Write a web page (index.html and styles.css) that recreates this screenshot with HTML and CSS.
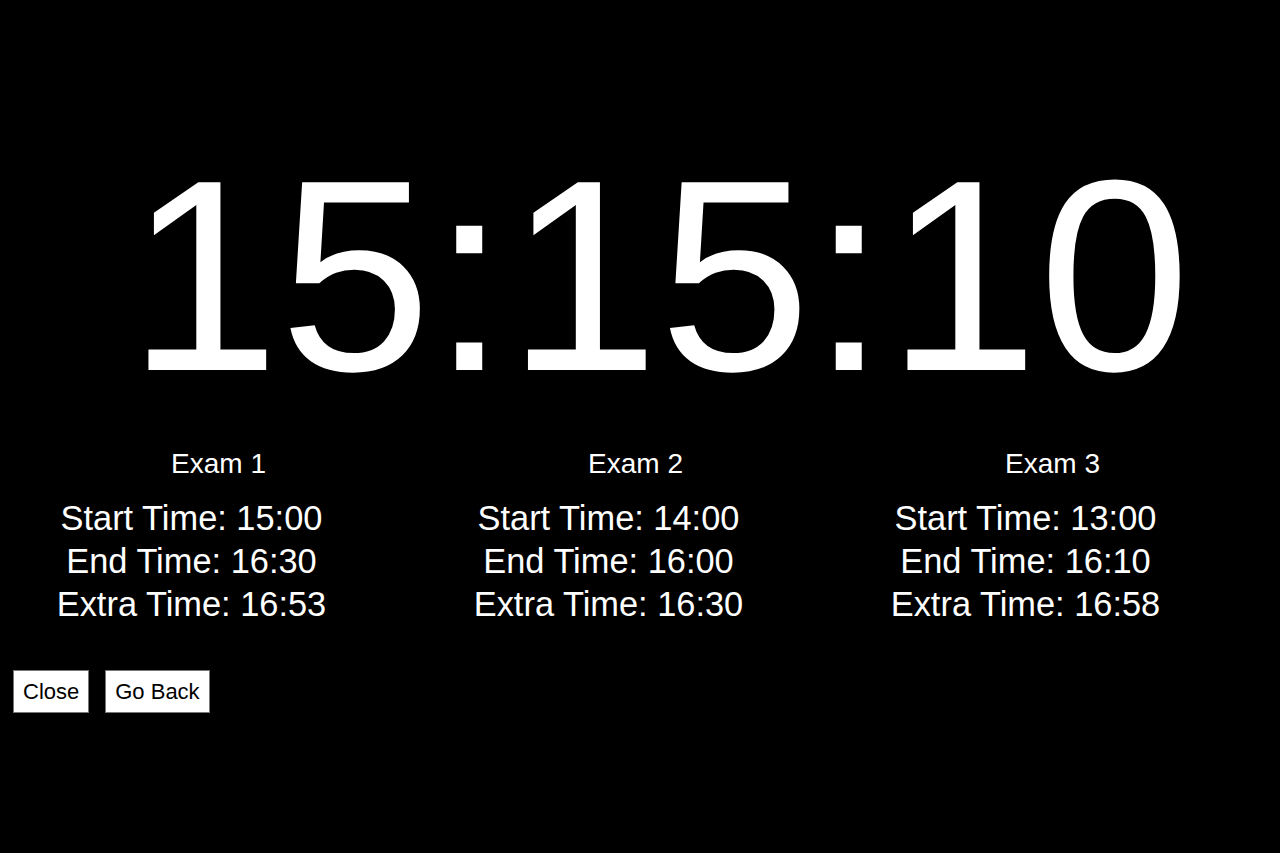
FILE: index.html
```html
<!DOCTYPE html>
<html lang="en">
<head>
<meta charset="utf-8">
<title>Exam Clock</title>
<link rel="stylesheet" href="styles.css">
</head>
<body>
<div class="clock">15:15:10</div>
<div class="exams">
  <div class="exam">
    <div class="exam-title">Exam 1</div>
    <div class="exam-times">
      <div class="time">Start Time: 15:00</div>
      <div class="time">End Time: 16:30</div>
      <div class="time">Extra Time: 16:53</div>
    </div>
  </div>
  <div class="exam">
    <div class="exam-title">Exam 2</div>
    <div class="exam-times">
      <div class="time">Start Time: 14:00</div>
      <div class="time">End Time: 16:00</div>
      <div class="time">Extra Time: 16:30</div>
    </div>
  </div>
  <div class="exam">
    <div class="exam-title">Exam 3</div>
    <div class="exam-times">
      <div class="time">Start Time: 13:00</div>
      <div class="time">End Time: 16:10</div>
      <div class="time">Extra Time: 16:58</div>
    </div>
  </div>
</div>
<div class="actions">
  <button class="btn">Close</button>
  <button class="btn">Go Back</button>
</div>
</body>
</html>
```
FILE: styles.css
```css
html, body {
  margin: 0;
  padding: 0;
  background: #000;
  color: #fff;
  font-family: "Liberation Sans", Arial, sans-serif;
}

body {
  width: 1280px;
  height: 853px;
  overflow: hidden;
}

.clock {
  margin-top: 118px;
  padding-left: 38px;
  font-size: 273px;
  line-height: 316px;
  text-align: center;
  white-space: nowrap;
}

.exams {
  display: flex;
  padding-left: 10px;
}

.exam {
  width: 417px;
  text-align: center;
}

.exam-title {
  margin-top: 14px;
  font-size: 28px;
  line-height: 32px;
}

.exam-times {
  margin-top: 17px;
  padding-right: 54px;
  font-size: 34.4px;
  line-height: 43px;
  white-space: nowrap;
}

.actions {
  display: flex;
  gap: 16px;
  margin-top: 44px;
  padding-left: 13px;
}

.btn {
  margin: 0;
  padding: 8px 9px;
  border: 1px solid #767676;
  border-radius: 0;
  background: #fff;
  color: #000;
  font-family: "Liberation Sans", Arial, sans-serif;
  font-size: 22px;
  line-height: 25px;
}
```
